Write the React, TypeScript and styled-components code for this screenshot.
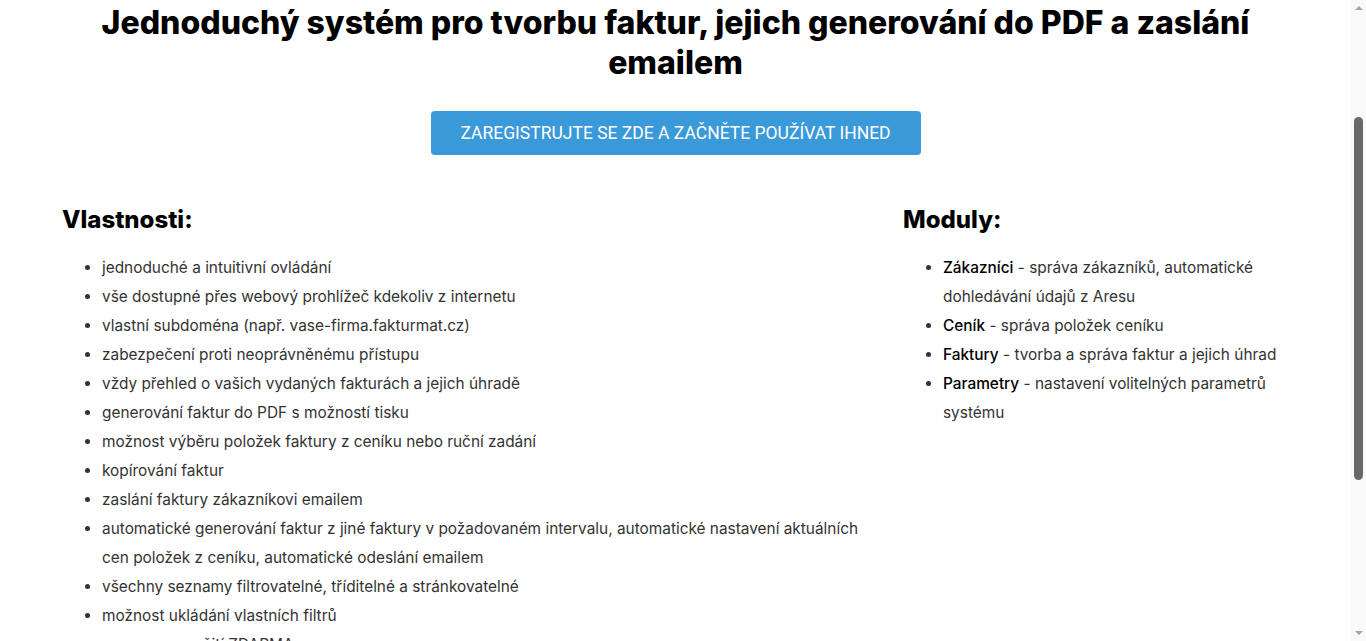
import React from 'react';
import styled, { createGlobalStyle } from 'styled-components';

const features = [
  'jednoduché a intuitivní ovládání',
  'vše dostupné přes webový prohlížeč kdekoliv z internetu',
  'vlastní subdoména (např. vase-firma.fakturmat.cz)',
  'zabezpečení proti neoprávněnému přístupu',
  'vždy přehled o vašich vydaných fakturách a jejich úhradě',
  'generování faktur do PDF s možností tisku',
  'možnost výběru položek faktury z ceníku nebo ruční zadání',
  'kopírování faktur',
  'zaslání faktury zákazníkovi emailem',
  'automatické generování faktur z jiné faktury v požadovaném intervalu, automatické nastavení aktuálních cen položek z ceníku, automatické odeslání emailem',
  'všechny seznamy filtrovatelné, tříditelné a stránkovatelné',
  'možnost ukládání vlastních filtrů',
  'verze pro použití ZDARMA',
  'podpora více uživatelů',
];

const modules = [
  { name: 'Zákazníci', text: 'správa zákazníků, automatické dohledávání údajů z Aresu' },
  { name: 'Ceník', text: 'správa položek ceníku' },
  { name: 'Faktury', text: 'tvorba a správa faktur a jejich úhrad' },
  { name: 'Parametry', text: 'nastavení volitelných parametrů systému' },
];

const App = () => {
  return (
    <>
      <GlobalStyle />
      <Page>
        <Title>Jednoduchý systém pro tvorbu faktur, jejich generování do PDF a zaslání emailem</Title>
        <Cta>
          <RegisterButton href="#">Zaregistrujte se zde a začněte používat ihned</RegisterButton>
        </Cta>
        <Columns>
          <Column>
            <SectionTitle>Vlastnosti:</SectionTitle>
            <List>
              {features.map((item) => (
                <li key={item}>{item}</li>
              ))}
            </List>
          </Column>
          <Column>
            <SectionTitle>Moduly:</SectionTitle>
            <List>
              {modules.map((m) => (
                <li key={m.name}>
                  <strong>{m.name}</strong> - {m.text}
                </li>
              ))}
            </List>
          </Column>
        </Columns>
      </Page>

      {/* window scrollbar, page is scrolled down a bit */}
      <ScrollTrack aria-hidden>
        <Arrow $dir="up" />
        <Thumb />
        <Arrow $dir="down" />
      </ScrollTrack>
    </>
  );
};

export default App;

const GlobalStyle = createGlobalStyle`
  body {
    margin: 0;
    background: #fff;
    color: #333;
    font-family: Inter, "Noto Sans", sans-serif;
  }
`;

const Page = styled.main`
  margin-right: 15px;
  padding-top: 3px;
  padding-bottom: 380px;
`;

const Title = styled.h1`
  margin: 0 auto;
  max-width: 1180px;
  text-align: center;
  font-size: 32px;
  font-weight: 800;
  line-height: 40px;
  color: #000;
`;

const Cta = styled.div`
  display: flex;
  justify-content: center;
  margin-top: 28px;
`;

const RegisterButton = styled.a`
  display: inline-flex;
  align-items: center;
  justify-content: center;
  width: 490px;
  height: 44px;
  border-radius: 4px;
  background: #3a99d8;
  color: #fff;
  font-family: Roboto, sans-serif;
  font-size: 17.5px;
  text-transform: uppercase;
  text-decoration: none;
`;

const Columns = styled.div`
  display: grid;
  grid-template-columns: 841px 1fr;
  max-width: 1257px;
  margin: 50px auto 0;
`;

const Column = styled.section`
  padding: 0 15px;
`;

const SectionTitle = styled.h2`
  margin: 0 0 19px;
  font-size: 24px;
  font-weight: 800;
  line-height: 29px;
  color: #000;
`;

const List = styled.ul`
  margin: 0;
  padding-left: 40px;
  font-size: 15.4px;
  line-height: 29px;

  strong {
    font-weight: 500;
    color: #000;
  }
`;

const ScrollTrack = styled.div`
  position: fixed;
  top: 0;
  right: 0;
  bottom: 0;
  width: 15px;
  display: flex;
  flex-direction: column;
  align-items: center;
  background: #f9f9f9;
`;

const Arrow = styled.div<{ $dir: 'up' | 'down' }>`
  width: 0;
  height: 0;
  margin: ${(p) => (p.$dir === 'up' ? '6px 0 0' : 'auto 0 6px')};
  border-left: 4px solid transparent;
  border-right: 4px solid transparent;
  ${(p) =>
    p.$dir === 'up' ? 'border-bottom: 4px solid #a3a3a3;' : 'border-top: 4px solid #a3a3a3;'}
`;

const Thumb = styled.div`
  width: 9px;
  height: 363px;
  margin-top: 107px;
  border-radius: 5px;
  background: #686868;
`;
